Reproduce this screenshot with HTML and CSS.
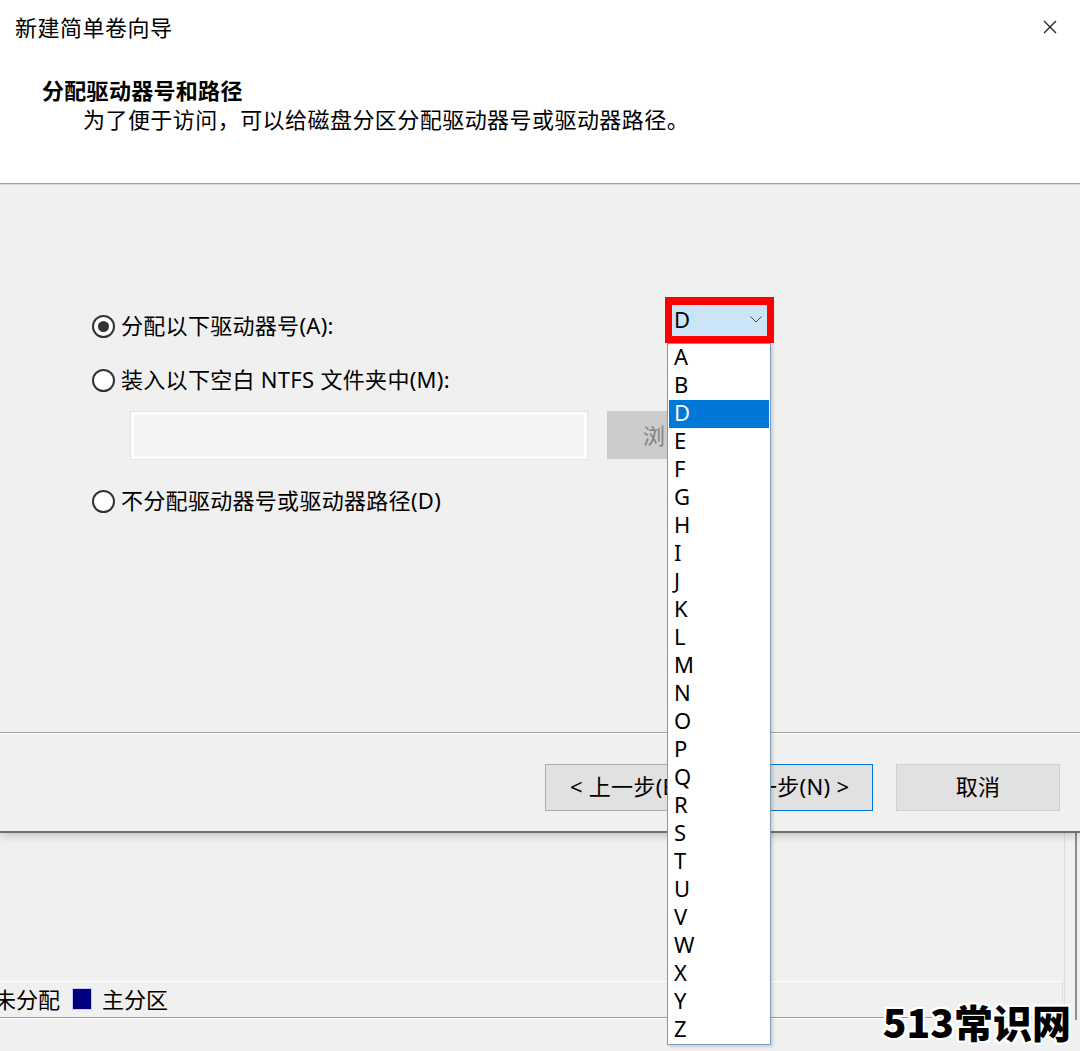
FILE: index.html
```html
<!DOCTYPE html>
<html lang="zh-CN">
<head>
<meta charset="utf-8">
<title>新建简单卷向导</title>
<link rel="stylesheet" href="styles.css">
</head>
<body>
<div class="screen">
  <div class="dialog">
    <div class="titlebar">
      <span class="title">新建简单卷向导</span>
      <svg class="close" width="14" height="14" viewBox="0 0 14 14"><path d="M1 1 L13 13 M13 1 L1 13" stroke="#222" stroke-width="1.3" fill="none"/></svg>
    </div>
    <div class="header">
      <div class="h-title">分配驱动器号和路径</div>
      <div class="h-sub">为了便于访问，可以给磁盘分区分配驱动器号或驱动器路径。</div>
    </div>
    <div class="sep"></div>
    <div class="body">
      <div class="row row-first">
        <div class="opt opt-main">
          <span class="radio checked"></span>
          <span class="label">分配以下驱动器号(A):</span>
        </div>
        <div class="combo-mark">
          <div class="combo">
            <span class="combo-val">D</span>
            <svg class="chev" width="12" height="7" viewBox="0 0 12 7"><path d="M0.5 0.5 L6 6 L11.5 0.5" stroke="#444" stroke-width="1" fill="none"/></svg>
          </div>
          <ul class="droplist">
            <li>A</li><li>B</li><li class="sel">D</li><li>E</li><li>F</li><li>G</li><li>H</li><li>I</li><li>J</li><li>K</li><li>L</li><li>M</li><li>N</li><li>O</li><li>P</li><li>Q</li><li>R</li><li>S</li><li>T</li><li>U</li><li>V</li><li>W</li><li>X</li><li>Y</li><li>Z</li>
          </ul>
        </div>
      </div>
      <div class="row row-second">
        <div class="opt">
          <span class="radio"></span>
          <span class="label">装入以下空白 NTFS 文件夹中(M):</span>
        </div>
      </div>
      <div class="row row-path">
        <div class="pathbox"></div>
        <div class="browse">浏览(R)...</div>
      </div>
      <div class="row row-third">
        <div class="opt">
          <span class="radio"></span>
          <span class="label">不分配驱动器号或驱动器路径(D)</span>
        </div>
      </div>
    </div>
    <div class="sep2"></div>
    <div class="footer">
      <div class="btn">&lt; 上一步(B)</div>
      <div class="btn btn-default">下一步(N) &gt;</div>
      <div class="btn btn-cancel">取消</div>
    </div>
  </div>
  <div class="below">
    <div class="below-main">
      <div class="below-space"></div>
      <div class="legend">
        <span class="lg-text lg-first">未分配</span>
        <span class="swatch"></span>
        <span class="lg-text">主分区</span>
      </div>
      <div class="legend-after"></div>
    </div>
    <div class="rail"></div>
  </div>
  <div class="watermark">513常识网</div>
</div>
</body>
</html>
```

FILE: styles.css
```css
* { box-sizing: border-box; }
html, body { margin: 0; padding: 0; }
body {
  width: 1080px;
  height: 1051px;
  overflow: hidden;
  background: #f0f0f0;
  font-family: "Noto Sans", "Noto Sans CJK SC", sans-serif;
  color: #000;
}
.screen {
  position: relative;
  width: 1080px;
  height: 1051px;
  overflow: hidden;
}
.dialog {
  position: relative;
  z-index: 2;
  background: #f0f0f0;
  border-bottom: 2px solid #6e6e6e;
  box-shadow: 0 3px 8px rgba(0,0,0,0.18);
}
.titlebar {
  height: 56px;
  background: #fff;
  display: flex;
  align-items: center;
  padding-left: 15px;
  padding-right: 23px;
  padding-bottom: 5px;
}
.title {
  font-family: "Noto Sans CJK SC", sans-serif;
  font-size: 22px;
  line-height: 1;
  letter-spacing: 0.5px;
}
.close { margin-left: auto; margin-top: 3px; }
.header {
  height: 127px;
  background: #fff;
  padding-left: 42px;
  padding-top: 18px;
  font-family: "Noto Sans CJK SC", sans-serif;
}
.h-title {
  font-size: 22px;
  font-weight: 700;
  line-height: 30px;
  letter-spacing: 0.3px;
}
.h-sub {
  font-size: 22px;
  line-height: 29px;
  padding-left: 41px;
  letter-spacing: 0.45px;
}
.sep {
  height: 2px;
  border-top: 1px solid #a0a0a0;
  border-bottom: 1px solid #d8d8d8;
}
.body {
  height: 547px;
  padding-top: 112px;
}
.row { display: flex; }
.row-first { height: 46px; padding-left: 92px; align-items: flex-start; }
.row-second { margin-top: 20px; padding-left: 92px; }
.row-path { margin-top: 14px; padding-left: 131px; gap: 20px; align-items: flex-end; }
.row-third { margin-top: 25px; padding-left: 92px; }
.opt {
  display: flex;
  align-items: center;
  height: 34px;
  gap: 6px;
}
.opt-main { width: 573px; margin-top: 12px; }
.radio {
  width: 23px;
  height: 23px;
  border: 2px solid #333;
  border-radius: 50%;
  background: #fff;
  display: flex;
  align-items: center;
  justify-content: center;
  flex: none;
}
.radio.checked::after {
  content: "";
  width: 11px;
  height: 11px;
  border-radius: 50%;
  background: #333;
}
.label {
  font-size: 22px;
  line-height: 34px;
  padding-bottom: 2px;
  white-space: nowrap;
  letter-spacing: 0.3px;
}
.combo-mark {
  position: relative;
  width: 109px;
  height: 46px;
  border: 7px solid #fe0000;
  border-top-width: 8px;
}
.combo {
  height: 100%;
  background: #cce4f7;
  display: flex;
  align-items: center;
  padding-left: 2px;
  padding-right: 5px;
  padding-bottom: 3px;
}
.combo-val { font-size: 22px; line-height: 1; }
.chev { margin-left: auto; margin-top: 1px; }
.droplist {
  position: absolute;
  left: -5px;
  top: 38px;
  width: 104px;
  height: 702px;
  margin: 0;
  padding: 0;
  list-style: none;
  background: #fff;
  border: 1px solid #7a9cc2;
  box-shadow: 2px 2px 3px rgba(0,0,0,0.15);
  z-index: 5;
}
.droplist li {
  height: 28px;
  line-height: 25px;
  font-size: 22px;
  padding-left: 6px;
}
.droplist li.sel {
  background: #0078d7;
  color: #fff;
  margin: 0 1px;
  padding-left: 5px;
}
.pathbox {
  width: 456px;
  height: 47px;
  background: #f4f4f4;
  border: 3px solid #fdfdfd;
  box-shadow: 0 0 0 1px #e4e4e4;
}
.browse {
  width: 164px;
  height: 48px;
  background: #cccccc;
  color: #838383;
  font-size: 22px;
  font-family: "Noto Sans CJK SC", sans-serif;
  display: flex;
  align-items: center;
  padding-left: 36px;
  padding-bottom: 3px;
}
.sep2 {
  height: 2px;
  border-top: 1px solid #a0a0a0;
  border-bottom: 1px solid #ffffff;
}
.footer {
  height: 97px;
  padding-top: 30px;
  padding-right: 20px;
  display: flex;
  justify-content: flex-end;
  align-items: flex-start;
}
.btn {
  width: 164px;
  height: 47px;
  background: #e1e1e1;
  border: 1px solid #adadad;
  font-size: 22px;
  display: flex;
  align-items: center;
  justify-content: center;
  padding-bottom: 5px;
  white-space: nowrap;
  letter-spacing: 0.3px;
}
.btn-default { border: 1px solid #0078d7; }
.btn-cancel { margin-left: 23px; border-color: #cfcfcf; }
.below {
  display: flex;
  height: 218px;
  background: #f0f0f0;
}
.below-main { width: 1063px; }
.below-space { height: 148px; }
.legend {
  height: 37px;
  border-top: 1px solid #ffffff;
  border-bottom: 1px solid #9a9a9a;
  border-right: 1px solid #e0e0e0;
  display: flex;
  align-items: center;
  gap: 10px;
  font-family: "Noto Sans CJK SC", sans-serif;
}
.legend-after { height: 2px; border-top: 1px solid #fff; }
.lg-text { font-size: 22px; line-height: 1; margin-top: -4px; }
.lg-first { margin-left: -6px; margin-right: 2px; }
.swatch {
  width: 20px;
  height: 22px;
  background: #000080;
  border: 1px solid #c8c8f0;
  margin-top: -2px;
}
.rail {
  margin-left: 1px;
  width: 13px;
  height: 187px;
  border-left: 1px solid #dcdcdc;
  border-right: 2px solid #8c8c8c;
}
.watermark {
  position: absolute;
  right: 9px;
  bottom: 10px;
  z-index: 10;
  font-family: "Noto Sans CJK SC", sans-serif;
  font-weight: 900;
  font-size: 39px;
  line-height: 1;
  color: #000;
  text-shadow: 2px 0 0 #fff, -2px 0 0 #fff, 0 2px 0 #fff, 0 -2px 0 #fff, 2px 2px 0 #fff, -2px -2px 0 #fff, 2px -2px 0 #fff, -2px 2px 0 #fff;
}
```
